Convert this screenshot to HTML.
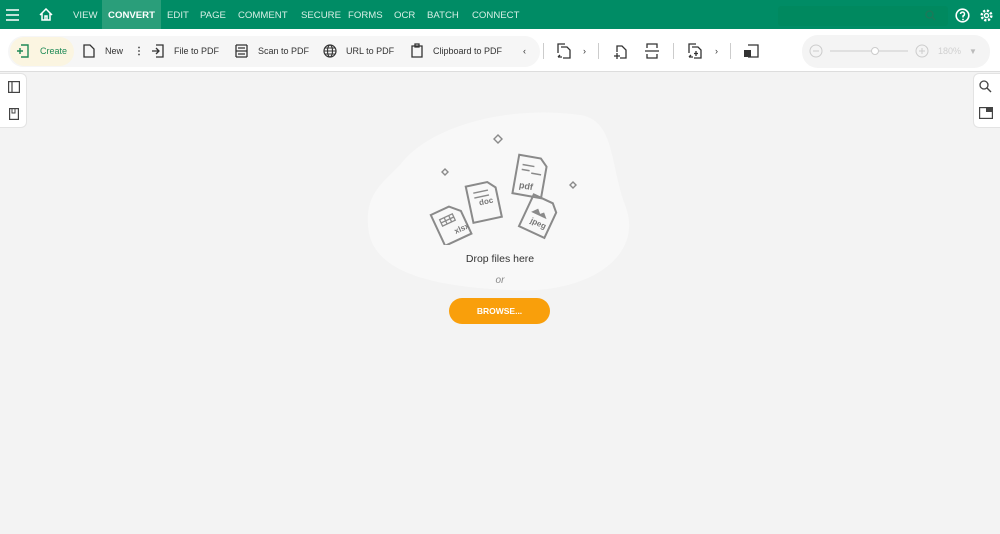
<!DOCTYPE html><html><head><style>
*{margin:0;padding:0;box-sizing:border-box}
body{width:1000px;height:534px;background:#f3f3f3;font-family:"Liberation Sans",sans-serif;position:relative;overflow:hidden}
.top{position:absolute;left:0;top:0;width:1000px;height:29px;background:#008c65}
.tab{position:absolute;top:0;height:29px;line-height:31px;color:#d7efe6;font-size:9.6px}
.tb{position:absolute;left:0;top:29px;width:1000px;height:43px;background:#fff;border-bottom:1px solid #ddd}
.t{position:absolute;top:46px;font-size:9px;color:#333}
.ic{position:absolute}
</style></head><body>
<div class="top">
<svg class="ic" style="left:6px;top:9px" width="14" height="12"><path d="M0 1h13M0 6h13M0 11h13" stroke="#fff" stroke-width="1.6"/></svg>
<svg class="ic" style="left:39px;top:8px" width="14" height="13"><path d="M1 7L7 1l6 6M3 5v7h8V5M6 12V8h2v4" stroke="#fff" stroke-width="1.5" fill="none"/></svg>
<div class="tab" style="left:73px">VIEW</div>
<div class="tab" style="left:102px;width:59px;background:#2a9e7a;color:#fff;font-weight:bold;text-align:center">CONVERT</div>
<div class="tab" style="left:167px">EDIT</div>
<div class="tab" style="left:200px">PAGE</div>
<div class="tab" style="left:238px">COMMENT</div>
<div class="tab" style="left:301px">SECURE</div>
<div class="tab" style="left:348px">FORMS</div>
<div class="tab" style="left:394px">OCR</div>
<div class="tab" style="left:427px">BATCH</div>
<div class="tab" style="left:472px">CONNECT</div>
<div style="position:absolute;left:778px;top:6px;width:170px;height:20px;background:#00895f;border-radius:3px"></div>
<svg class="ic" style="left:925px;top:10px" width="11" height="11"><circle cx="4.5" cy="4.5" r="3.5" stroke="#1b7a5a" fill="none" stroke-width="1.5"/><path d="M7 7l3 3" stroke="#1b7a5a" stroke-width="1.5"/></svg>
<svg class="ic" style="left:955px;top:8px" width="15" height="15"><circle cx="7.5" cy="7.5" r="6.3" stroke="#fff" fill="none" stroke-width="1.6"/><path d="M5.5 6a2 2 0 1 1 2.5 2v1.5" stroke="#fff" fill="none" stroke-width="1.5"/><circle cx="8" cy="11.5" r=".9" fill="#fff"/></svg>
<svg class="ic" style="left:979px;top:8px" width="15" height="15"><circle cx="7.5" cy="7.5" r="4.8" stroke="#fff" fill="none" stroke-width="2.5" stroke-dasharray="2.2 1.6"/><circle cx="7.5" cy="7.5" r="2" stroke="#fff" fill="none" stroke-width="1.4"/></svg>
</div>
<div class="tb"></div>
<div style="position:absolute;left:8px;top:36px;width:532px;height:31px;background:#f6f6f6;border-radius:16px"></div>
<div style="position:absolute;left:10px;top:37px;width:64px;height:29px;background:#fbf5e1;border-radius:15px"></div>
<svg class="ic" style="left:16px;top:44px" width="14" height="14"><path d="M5 1h7v12H5M1 7h6M4 4v6" stroke="#1f8a57" fill="none" stroke-width="1.4"/></svg>
<div class="t" style="left:40px;color:#1f8a57">Create</div>
<svg class="ic" style="left:83px;top:44px" width="12" height="14"><path d="M1 1h6l4 4v8H1z" stroke="#333" fill="none" stroke-width="1.3"/></svg>
<div class="t" style="left:105px">New</div>
<div class="t" style="left:134px;font-weight:bold;font-size:10px">⋮</div>
<svg class="ic" style="left:151px;top:44px" width="14" height="14"><path d="M5 1h7v12H5M1 7h7M5 4l3 3-3 3" stroke="#333" fill="none" stroke-width="1.3"/></svg>
<div class="t" style="left:174px">File to PDF</div>
<svg class="ic" style="left:235px;top:44px" width="13" height="14"><path d="M1 1h11M3 4h7M1 7h11M3 10h7M1 13h11M1 1v12M12 1v12" stroke="#333" fill="none" stroke-width="1.3"/></svg>
<div class="t" style="left:258px">Scan to PDF</div>
<svg class="ic" style="left:323px;top:44px" width="14" height="14"><circle cx="7" cy="7" r="6" stroke="#333" fill="none" stroke-width="1.2"/><ellipse cx="7" cy="7" rx="2.5" ry="6" stroke="#333" fill="none" stroke-width="1.1"/><path d="M1 7h12M2 4h10M2 10h10" stroke="#333" stroke-width="1"/></svg>
<div class="t" style="left:346px">URL to PDF</div>
<svg class="ic" style="left:411px;top:43px" width="12" height="15"><path d="M1 3h10v11H1zM4 1h4v3H4z" stroke="#333" fill="none" stroke-width="1.3"/></svg>
<div class="t" style="left:433px">Clipboard to PDF</div>
<div class="t" style="left:523px">‹</div>
<div style="position:absolute;left:543px;top:43px;width:1px;height:16px;background:#ccc"></div>
<svg class="ic" style="left:556px;top:43px" width="16" height="16"><path d="M2 10V1h7M5 4h6l3 3v8H7M4 12l-2 2M2 14h4" stroke="#333" fill="none" stroke-width="1.3"/></svg>
<div class="t" style="left:583px">›</div>
<div style="position:absolute;left:598px;top:43px;width:1px;height:16px;background:#ccc"></div>
<svg class="ic" style="left:612px;top:43px" width="16" height="16"><path d="M5 9V3h5l4 4v8H8M2 13h6M5 10v6" stroke="#333" fill="none" stroke-width="1.3"/></svg>
<svg class="ic" style="left:644px;top:43px" width="16" height="16"><path d="M3 5V1h10v4M3 11v4h10v-4M1 8h14" stroke="#333" fill="none" stroke-width="1.3"/></svg>
<div style="position:absolute;left:673px;top:43px;width:1px;height:16px;background:#ccc"></div>
<svg class="ic" style="left:687px;top:43px" width="16" height="16"><path d="M2 10V1h7M5 4h6l3 3v8H7M9 8v5M7 10.5h4M4 12l-2 2M2 14h4" stroke="#333" fill="none" stroke-width="1.3"/></svg>
<div class="t" style="left:715px">›</div>
<div style="position:absolute;left:730px;top:43px;width:1px;height:16px;background:#ccc"></div>
<svg class="ic" style="left:743px;top:44px" width="16" height="14"><path d="M5 1h10v12H5" stroke="#333" fill="none" stroke-width="1.3"/><rect x="1" y="6" width="7" height="7" fill="#333"/></svg>
<div style="position:absolute;left:802px;top:35px;width:188px;height:33px;background:#f4f4f4;border-radius:16px"></div>
<svg class="ic" style="left:808px;top:43px" width="130" height="16"><circle cx="8" cy="8" r="6" stroke="#ccc" fill="none"/><path d="M5 8h6M22 8h78M111 8h6M114 5v6" stroke="#ccc"/><circle cx="67" cy="8" r="3.5" fill="#fff" stroke="#ccc"/><circle cx="114" cy="8" r="6" stroke="#ccc" fill="none"/></svg>
<div class="t" style="left:938px;color:#d0d0d0">180%</div>
<div class="t" style="left:969px;color:#bbb;font-size:8px;top:47px">▼</div>
<div style="position:absolute;left:0;top:73px;width:27px;height:55px;background:#fff;border:1px solid #e3e3e3;border-left:none;border-radius:0 6px 6px 0"></div>
<svg class="ic" style="left:8px;top:81px" width="12" height="12"><rect x=".6" y=".6" width="10.8" height="10.8" stroke="#444" fill="none" stroke-width="1.2"/><path d="M4 1v10" stroke="#444" stroke-width="1.2"/></svg>
<svg class="ic" style="left:9px;top:108px" width="10" height="12"><rect x=".6" y=".6" width="8.8" height="10.8" stroke="#444" fill="none" stroke-width="1.2"/><path d="M3 1v4h3V1" stroke="#444" fill="none"/></svg>
<div style="position:absolute;left:973px;top:73px;width:27px;height:55px;background:#fff;border:1px solid #e3e3e3;border-right:none;border-radius:6px 0 0 6px"></div>
<svg class="ic" style="left:979px;top:80px" width="13" height="13"><circle cx="5" cy="5" r="4" stroke="#444" fill="none" stroke-width="1.3"/><path d="M8 8l4 4" stroke="#444" stroke-width="1.4"/></svg>
<svg class="ic" style="left:979px;top:107px" width="14" height="12"><rect x=".6" y=".6" width="12.8" height="10.8" stroke="#444" fill="none" stroke-width="1.2"/><rect x="7" y="1" width="6" height="4" fill="#444"/></svg>
<svg class="ic" style="left:360px;top:105px" width="280" height="200"><path d="M40 60C70 20 150 0 220 10 255 15 250 60 265 100 285 150 230 190 150 185 80 182 10 170 8 120 6 90 20 80 40 60z" fill="#f8f8f8"/></svg>
<svg class="ic" style="left:420px;top:125px" width="170" height="120" fill="none" stroke="#8a8a8a" stroke-width="2">
<path d="M74 14l4-4 4 4-4 4zM22 47l3-3 3 3-3 3zM150 60l3-3 3 3-3 3z" stroke-width="1.4"/>
<g transform="rotate(-25 32 100)"><path d="M17 82h20l9 9v25H17z"/><path d="M23 90h14v7H23zM23 93.5h14M28 90v7M33 90v7" stroke-width="1.3"/></g>
<g transform="rotate(-12 65 80)"><path d="M50 58h22l7 7v30H50z"/><path d="M56 66h15M56 71h15" stroke-width="1.5"/></g>
<g transform="rotate(10 110 55)"><path d="M95 32h22l7 7v32H95z"/><path d="M100 41h12M100 46h8M110 48h10" stroke-width="1.5"/></g>
<g transform="rotate(25 122 92)"><path d="M105 75h21l7 7v28h-28z"/><path d="M110 92l5-6 4 4 3-3 5 5z" fill="#8a8a8a" stroke="none"/></g>
</svg>
<div style="position:absolute;left:479px;top:197px;font-size:8px;font-weight:bold;color:#777;transform:rotate(-12deg)">doc</div>
<div style="position:absolute;left:519px;top:181px;font-size:9px;font-weight:bold;color:#777;transform:rotate(10deg)">pdf</div>
<div style="position:absolute;left:454px;top:224px;font-size:8px;font-weight:bold;color:#777;transform:rotate(-25deg)">xlsx</div>
<div style="position:absolute;left:530px;top:219px;font-size:8px;font-weight:bold;color:#777;transform:rotate(25deg)">jpeg</div>
<div style="position:absolute;left:0;width:1000px;top:253px;text-align:center;font-size:10.5px;color:#333">Drop files here</div>
<div style="position:absolute;left:0;width:1000px;top:275px;text-align:center;font-size:10px;color:#888;font-style:italic">or</div>
<div style="position:absolute;left:449px;top:298px;width:101px;height:26px;background:#f99f0b;border-radius:13px;color:#fff;font-size:8.5px;font-weight:bold;text-align:center;line-height:26px">BROWSE...</div>
</body></html>
